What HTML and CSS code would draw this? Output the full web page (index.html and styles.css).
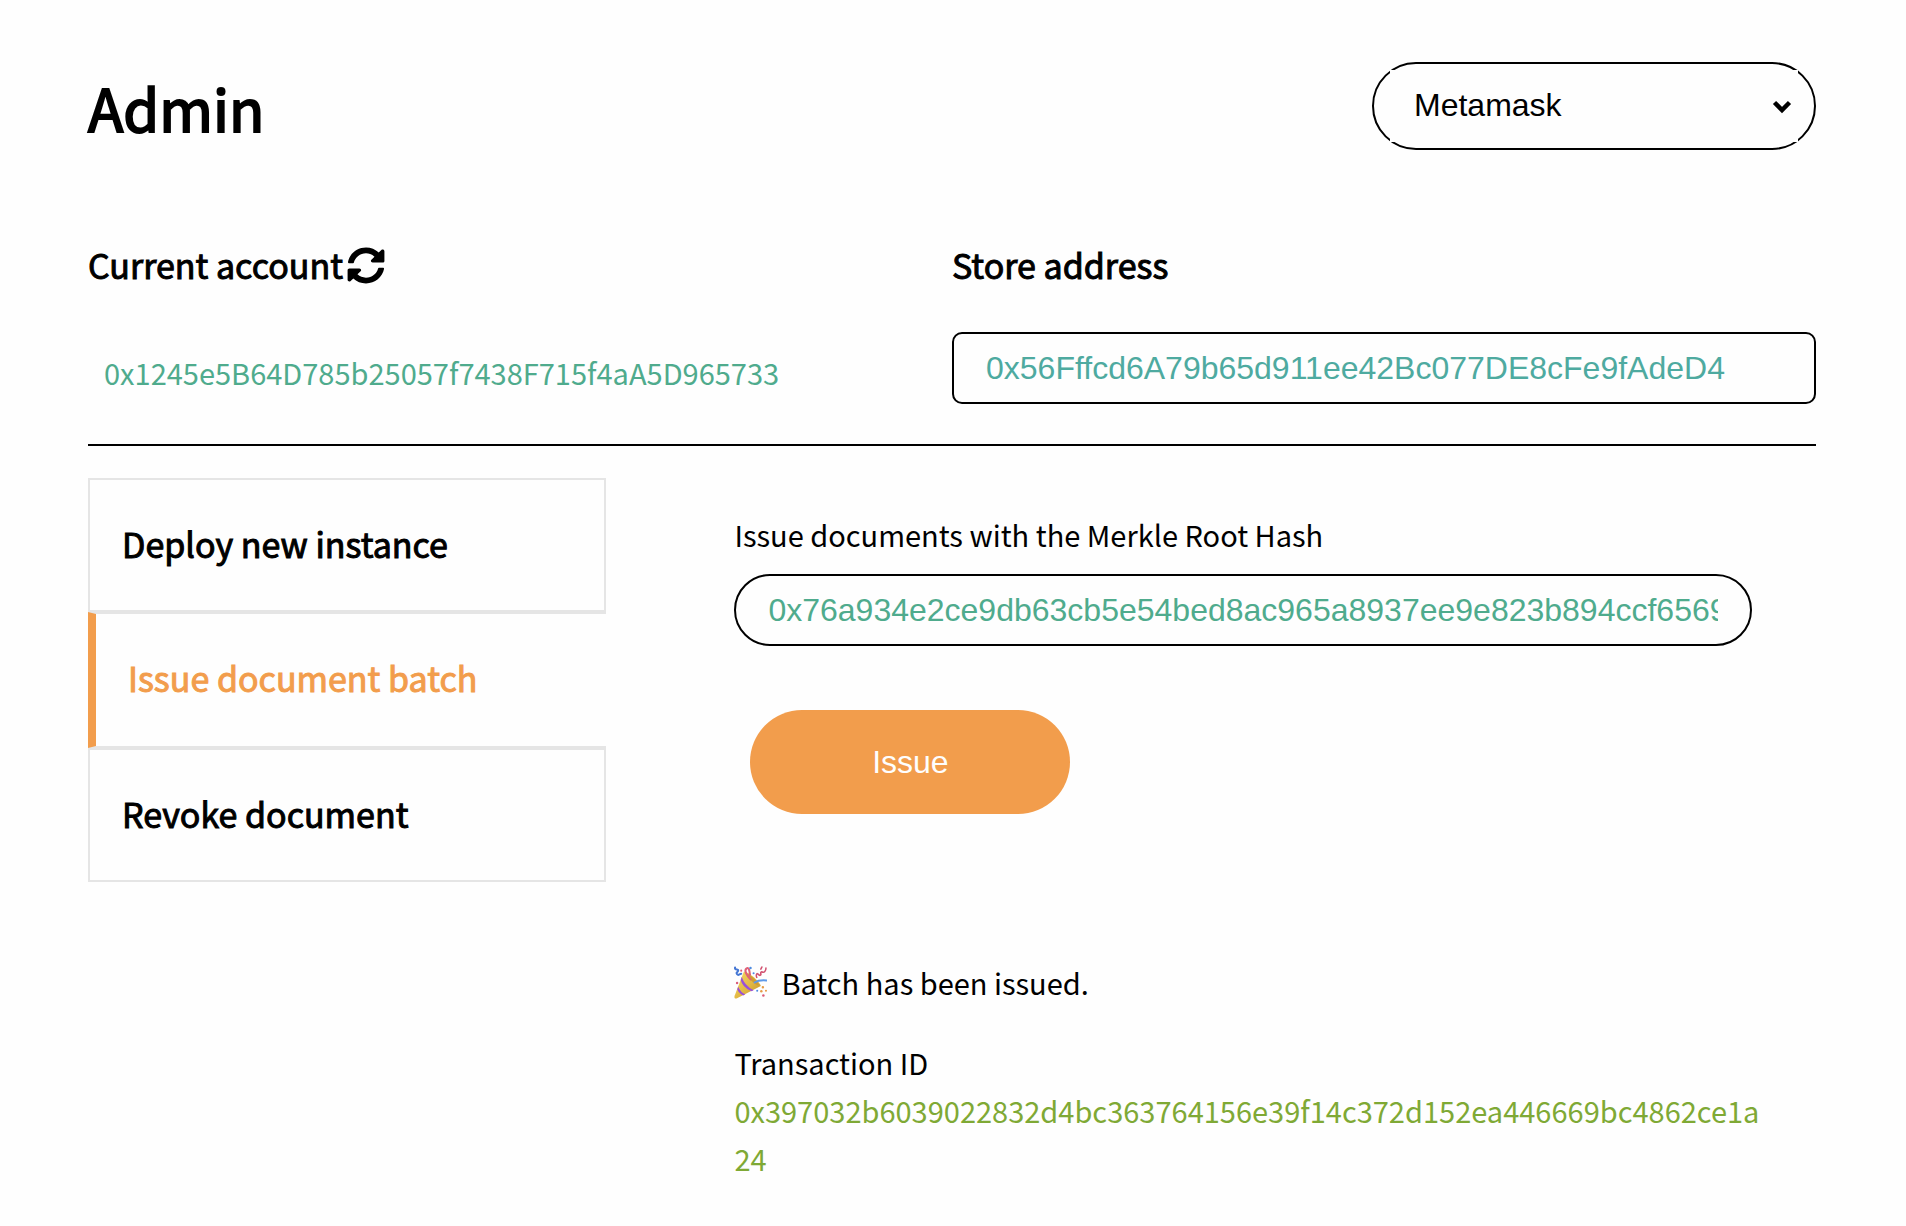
FILE: index.html
```html
<!DOCTYPE html>
<html lang="en">
<head>
<meta charset="utf-8">
<title>Admin</title>
<meta name="viewport" content="width=device-width, initial-scale=1">
<link rel="stylesheet" href="styles.css">
</head>
<body>
<main class="page">
  <header class="header">
    <h1 class="title">Admin</h1>
    <div class="picker">
      <select class="picker-select" aria-label="Wallet provider">
        <option>Metamask</option>
      </select>
      <svg class="picker-arrow" viewBox="0 0 20 14" aria-hidden="true"><path d="M2.500 2.500 10 10l7.500-7.500" fill="none" stroke="#000" stroke-width="4.500"/></svg>
    </div>
  </header>

  <section class="accounts">
    <div class="account">
      <h2 class="heading">Current account
        <button class="refresh" type="button" aria-label="Refresh account">
          <svg class="refresh-icon" viewBox="0 0 512 512" preserveAspectRatio="none" aria-hidden="true"><path d="M370.720 133.280C339.458 104.008 298.888 87.962 255.848 88c-77.458.068-144.328 53.178-162.791 126.850-1.344 5.363-6.122 9.150-11.651 9.150H24.103c-7.498 0-13.194-6.807-11.807-14.176C33.933 94.924 134.813 8 256 8c66.448 0 126.791 26.136 171.315 68.685L463.030 40.970C478.149 25.851 504 36.559 504 57.941V192c0 13.255-10.745 24-24 24H345.941c-21.382 0-32.090-25.851-16.971-40.971l41.750-41.749zM32 296h134.059c21.382 0 32.090 25.851 16.971 40.971l-41.750 41.750c31.262 29.273 71.835 45.319 114.876 45.280 77.418-.070 144.315-53.144 162.787-126.849 1.344-5.363 6.122-9.150 11.651-9.150h57.304c7.498 0 13.194 6.807 11.807 14.176C478.067 417.076 377.187 504 256 504c-66.448 0-126.791-26.136-171.315-68.685L48.970 471.030C33.851 486.149 8 475.441 8 454.059V320c0-13.255 10.745-24 24-24z"/></svg>
        </button>
      </h2>
      <p class="account-id">0x1245e5B64D785b25057f7438F715f4aA5D965733</p>
    </div>
    <div class="store">
      <h2 class="heading"><label for="store">Store address</label></h2>
      <input class="field field-store" id="store" type="text" value="0x56Fffcd6A79b65d911ee42Bc077DE8cFe9fAdeD4">
    </div>
  </section>

  <div class="workspace">
    <nav class="tabs">
      <a class="tab" href="#deploy">Deploy new instance</a>
      <a class="tab tab-active" href="#issue" aria-current="page">Issue document batch</a>
      <a class="tab" href="#revoke">Revoke document</a>
    </nav>
    <section class="panel">
      <label class="panel-label" for="hash">Issue documents with the Merkle Root Hash</label>
      <input class="field field-hash" id="hash" type="text" value="0x76a934e2ce9db63cb5e54bed8ac965a8937ee9e823b894ccf6569">
      <button class="issue" type="button">Issue</button>
      <div class="result">
        <p class="status">
          <svg class="party" viewBox="0 0 32 32" aria-hidden="true">
            <defs><linearGradient id="cone" x1="0" y1="0" x2="1" y2="1"><stop offset="0" stop-color="#f8dc68"/><stop offset=".6" stop-color="#dfb33f"/><stop offset="1" stop-color="#b98a2c"/></linearGradient></defs>
            <path d="M9.500 5.500C14 5 25 15 26 19.500L2.500 31.500Q0 32 .5 29Z" fill="url(#cone)"/>
            <path d="M7.500 10.500Q10 19 19 23.500L17 24.500Q8 20.500 6.500 13.500ZM4 20Q6.500 25.500 11 27.500L9 28.500Q4.500 26.500 3.200 22.500Z" fill="#9950d8"/>
            <path d="M13 7.500C17 9 23.500 15.500 24.500 19c-3 0-10-5.500-11.500-11.500Z" fill="#cf9c33"/>
            <g fill="none" stroke-linecap="round" stroke-width="2">
              <path d="M16 13C12.500 9 9.500 4.500 12 2.500s3 2 3.500 6" stroke="#df6178"/>
              <path d="M20 16c3-2 6-2.500 11.500-2" stroke="#5d99e8"/>
              <path d="M1 1.500c-.5 3 3.500 1 3 3S1.500 6 3 8s2-.5 4-.5" stroke="#4677d4"/>
              <path d="M22 11c-1-3 .5-4.500 1.500-3s3 1.500 2.500-.5 1-2 2-1.500 3-1 3-4M27 1l-1 2" stroke="#d25170" stroke-width="1.500"/>
            </g>
            <g fill="#4e8be0"><circle cx="16" cy="2" r="1.200"/><circle cx="22.500" cy="24" r="1"/><circle cx="19" cy="7" r="1"/></g>
            <g fill="#db5c78"><circle cx="3" cy="16.500" r="1.200"/><circle cx="28.500" cy="28.500" r="1.200"/><circle cx="7" cy="4.500" r="1"/></g>
            <g fill="#e79a43"><circle cx="28" cy="20.500" r="1.200"/><circle cx="26.500" cy="24.500" r="1.200"/><circle cx="31" cy="24" r="1"/></g>
          </svg>
          <span>Batch has been issued.</span>
        </p>
        <p class="tx-label">Transaction ID</p>
        <a class="tx" href="#tx">0x397032b6039022832d4bc363764156e39f14c372d152ea446669bc4862ce1a<wbr>24</a>
      </div>
    </section>
  </div>
</main>
</body>
</html>
```
FILE: styles.css
```css
* {
  box-sizing: border-box;
}

body {
  margin: 0;
  background: #fefefe;
  color: #000;
  font: 29px/48px "Noto Sans CJK SC", sans-serif;
}

h1,
h2,
p {
  margin: 0;
  font-weight: 400;
}

.page {
  padding: 62px 90px 32px 88px;
}

.header {
  display: flex;
  justify-content: space-between;
}

.title {
  padding-top: 5px;
  font-size: 58px;
  line-height: 80px;
  -webkit-text-stroke: 2px #000;
}

.picker {
  position: relative;
  width: 444px;
  padding: 6px 16px;
  border: 2px solid #000;
  border-radius: 44px;
}

.picker-select {
  display: block;
  width: 100%;
  height: 72px;
  padding: 0 24px 2px;
  border: 0;
  appearance: none;
  background: #fefefe;
  color: #000;
  font: 32px "Liberation Sans", Arial, sans-serif;
}

.picker-arrow {
  position: absolute;
  top: 36px;
  right: 22px;
  width: 20px;
  height: 14px;
  pointer-events: none;
}

.accounts {
  display: grid;
  grid-template-columns: 1fr 1fr;
  padding: 91px 0 40px;
  border-bottom: 2px solid #000;
}

.heading {
  display: flex;
  align-items: center;
  gap: 4px;
  font-size: 34px;
  line-height: 48px;
  -webkit-text-stroke: 1px #000;
}

.refresh {
  display: flex;
  padding: 0;
  border: 0;
  background: none;
}

.refresh-icon {
  width: 38px;
  height: 37px;
}

.account-id {
  padding: 59px 16px 0;
  color: #4fab8d;
}

.field {
  display: block;
  width: 100%;
  height: 72px;
  padding: 0 32px;
  border: 2px solid #000;
  background: #fefefe;
  font: 32px "Liberation Sans", Arial, sans-serif;
}

.field-store {
  margin-top: 43px;
  border-radius: 10px;
  color: #4eaaa0;
}

.field-hash {
  margin-top: 16px;
  border-radius: 36px;
  color: #4fab8d;
}

.workspace {
  display: grid;
  grid-template-columns: 3fr 7fr;
  align-items: start;
  padding-top: 32px;
}

.tabs {
  display: flex;
  flex-direction: column;
}

.tab {
  padding: 40px 32px 42px;
  border: 2px solid #e5e5e5;
  color: #000;
  font-size: 34px;
  line-height: 48px;
  text-decoration: none;
  -webkit-text-stroke: 1px currentColor;
}

.tab-active {
  padding-bottom: 44px;
  border-right: 0;
  border-left: 8px solid #f29d4c;
  color: #f29d4c;
}

.panel {
  min-width: 0;
  padding: 32px 64px 0 128px;
}

.panel-label {
  display: block;
}

.issue {
  display: block;
  width: 320px;
  height: 104px;
  margin: 64px 16px 0;
  border: 0;
  border-radius: 52px;
  background: #f29d4c;
  color: #fefefe;
  font: 32px "Liberation Sans", Arial, sans-serif;
}

.result {
  padding-top: 144px;
}

.status {
  display: flex;
  align-items: center;
  gap: 14px;
}

.party {
  width: 33px;
  height: 33px;
}

.tx-label {
  padding-top: 32px;
}

.tx {
  display: block;
  color: #7fa935;
  text-decoration: none;
}
```
